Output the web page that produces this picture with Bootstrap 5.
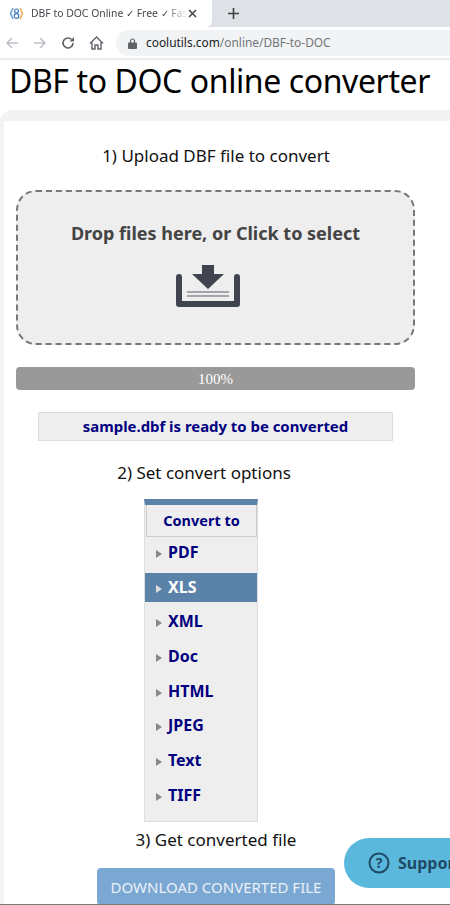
<!DOCTYPE html>
<html lang="en">
<head>
    <meta charset="UTF-8">
    <meta name="viewport" content="width=device-width, initial-scale=1.0">
    <title>DBF to DOC online converter</title>
    <link href="https://cdn.jsdelivr.net/npm/bootstrap@5.3.5/dist/css/bootstrap.min.css" rel="stylesheet">
    <style>
        html, body { height: 905px; overflow: hidden; }
        body { position: relative; font-family: "Noto Sans", "Liberation Sans", sans-serif; color: #111; background: #fff; }
        .tab-strip { height: 27px; background: #dee1e6; }
        .browser-tab { width: 212px; background: #fff; border-radius: 0 0 6px 0; padding: 0 0 0 9px; font-size: 10.4px; color: #45484d; white-space: nowrap; }
        .tab-title { width: 157px; overflow: hidden; margin-left: 7px; -webkit-mask-image: linear-gradient(to right, #000 85%, transparent); mask-image: linear-gradient(to right, #000 85%, transparent); }
        .tool-bar { height: 33px; padding: 1px 0 0 5px; border-bottom: 2px solid #eceded; }
        .tool-bar svg.gap-icon { margin-left: 14px; }
        .omni { flex: 1; height: 26px; margin-left: 12px; background: #f1f3f4; border-radius: 13px 0 0 13px; padding-left: 12px; font-size: 11.9px; color: #70757a; }
        .omni svg { margin-right: 9px; }
        .omni b { font-weight: 400; color: #202124; }
        .page-title { font-family: "Noto Sans", sans-serif; font-size: 32px; letter-spacing: -.4px; font-weight: 400; line-height: 41px; margin: 0; padding-left: 9px; color: #000; white-space: nowrap; }
        .panel-wrap { margin-top: 9px; height: 795px; background: #f3f3f3; border-radius: 12px 0 0 0; padding: 11px 0 0 4px; }
        .panel-inner { height: 100%; background: #fff; padding-left: 12px; width: 100%; }
        .step-label { font-size: 17px; line-height: 22px; text-align: center; width: 400px; }
        .step-one { padding-top: 24px; }
        .step-two { width: 376px; margin-top: 21px; }
        .step-three { margin-top: 7px; }
        .drop-area { width: 399px; height: 155px; margin-top: 23px; background: #eee; border: 2px dashed #777; border-radius: 20px; padding-top: 29px; text-align: center; color: #444; font-weight: 700; font-size: 18px; line-height: 24px; }
        .drop-area svg { display: block; margin: 20px 0 0 158px; }
        .bar-done { width: 399px; height: 23px; margin-top: 22px; background: #999; border-radius: 4px; color: #fff; font-family: "Liberation Serif", serif; font-size: 15px; line-height: 24px; text-align: center; }
        .ready-note { width: 355px; height: 29px; margin: 22px 0 0 22px; background: #eee; border: 1px solid #ddd; color: #000080; font-weight: 700; font-size: 14.9px; line-height: 27px; text-align: center; }
        .format-menu { width: 114px; margin: 15px 0 0 128px; background: #eee; border: 1px solid #ddd; border-top: 6px solid #5b82a8; height: 323px; }
        .menu-head { margin: 0 0 0 1px; height: 32px; background: #eee; border: 1px solid #ccc; border-top: 0; color: #000080; font-weight: 700; font-size: 14.5px; line-height: 31px; text-align: center; }
        .menu-item { height: 29px; margin-top: 5.7px; padding-left: 11px; color: #000080; font-weight: 700; font-size: 16px; line-height: 29px; }
        .menu-head + .menu-item { margin-top: 1px; }
        .menu-item.active-item { background: #5b82a8; color: #fff; }
        .menu-item i { display: inline-block; border-left: 6px solid #888; border-top: 4.5px solid transparent; border-bottom: 4.5px solid transparent; margin-right: 6px; }
        .active-item i { border-left-color: #ddd; }
        .download-btn { width: 238px; height: 37px; margin: 17px 0 0 81px; padding: 0; background: #7ba8d2; border: 0; border-radius: 4px; color: #e9f0f7; font-size: 15px; line-height: 36px; display: block; }
        .support-btn { position: absolute; left: 344px; top: 838px; width: 130px; height: 50px; background: #5bb8dd; border-radius: 25px; color: #1f4a66; font-weight: 700; font-size: 16px; padding-left: 24px; white-space: nowrap; }
        .bottom-line { position: absolute; left: 0; right: 0; top: 904px; height: 1px; background: #777; }
    </style>
</head>
<body>
    <div class="tab-strip d-flex">
        <div class="browser-tab d-flex align-items-center">
            <svg width="15" height="15" viewBox="0 0 15 15"><path d="M4 2 1.500 7.500 4 13" fill="none" stroke="#6aa5d8" stroke-width="1.600"/><path d="M11 2l2.500 5.500L11 13" fill="none" stroke="#e8b35a" stroke-width="1.600"/><circle cx="7.500" cy="5" r="2" fill="none" stroke="#3a78b8" stroke-width="1.200"/><circle cx="7.500" cy="10" r="2.300" fill="none" stroke="#3a78b8" stroke-width="1.200"/></svg>
            <div class="tab-title">DBF to DOC Online ✓ Free ✓ Fast</div>
            <svg width="9" height="9" viewBox="0 0 9 9"><path d="M1 1l7 7M8 1 1 8" stroke="#45484d" stroke-width="1.600"/></svg>
        </div>
        <svg class="ms-3 mt-2" width="11" height="11" viewBox="0 0 11 11"><path d="M5.500 0v11M0 5.500h11" stroke="#3c4043" stroke-width="1.600"/></svg>
    </div>
    <div class="tool-bar d-flex align-items-center">
        <svg width="14" height="14" viewBox="0 0 14 14"><path d="M13 7H2M7 2 2 7l5 5" fill="none" stroke="#bdc1c6" stroke-width="1.500"/></svg>
        <svg class="gap-icon" width="14" height="14" viewBox="0 0 14 14"><path d="M1 7h11M7 2l5 5-5 5" fill="none" stroke="#bdc1c6" stroke-width="1.500"/></svg>
        <svg class="gap-icon" width="14" height="14" viewBox="0 0 14 14"><path d="M12 7a5 5 0 1 1-1.500-3.600" fill="none" stroke="#5f6368" stroke-width="1.600"/><path d="M13 1v4.500H8.500z" fill="#5f6368"/></svg>
        <svg class="gap-icon" width="15" height="14" viewBox="0 0 15 14"><path d="M1 7.500 7.500 1 14 7.500M3 6.500V13h3V9h3v4h3V6.500" fill="none" stroke="#5f6368" stroke-width="1.400"/></svg>
        <div class="omni d-flex align-items-center">
            <svg width="9" height="11" viewBox="0 0 9 11"><path d="M2.500 5V3a2 2 0 0 1 4 0v2" fill="none" stroke="#5f6368" stroke-width="1.200"/><rect y="4.500" width="9" height="6.500" rx="1" fill="#5f6368"/></svg>
            <span><b>coolutils.com</b>/online/DBF-to-DOC</span>
        </div>
    </div>
    <h1 class="page-title">DBF to DOC online converter</h1>
    <div class="panel-wrap">
        <div class="panel-inner">
            <div class="step-label step-one">1) Upload DBF file to convert</div>
            <div class="drop-area">
                Drop files here, or Click to select
                <svg width="64" height="42" viewBox="0 0 64 42">
                    <path d="M26 0h12v9h10L32 24 16 9h10z" fill="#40444f"/>
                    <path d="M3 12v27h58V12" fill="none" stroke="#40444f" stroke-width="6" stroke-linecap="round" stroke-linejoin="round"/>
                    <path d="M11 27h42M11 31h42" stroke="#8a8d94" stroke-width="1.500"/>
                </svg>
            </div>
            <div class="bar-done">100%</div>
            <div class="ready-note">sample.dbf is ready to be converted</div>
            <div class="step-label step-two">2) Set convert options</div>
            <div class="format-menu">
                <div class="menu-head">Convert to</div>
                <div class="menu-item"><i></i>PDF</div>
                <div class="menu-item active-item"><i></i>XLS</div>
                <div class="menu-item"><i></i>XML</div>
                <div class="menu-item"><i></i>Doc</div>
                <div class="menu-item"><i></i>HTML</div>
                <div class="menu-item"><i></i>JPEG</div>
                <div class="menu-item"><i></i>Text</div>
                <div class="menu-item"><i></i>TIFF</div>
            </div>
            <div class="step-label step-three">3) Get converted file</div>
            <button class="download-btn" type="button">DOWNLOAD CONVERTED FILE</button>
        </div>
    </div>
    <div class="support-btn d-flex align-items-center">
        <svg class="me-2" width="22" height="22" viewBox="0 0 22 22"><circle cx="11" cy="11" r="9.500" fill="none" stroke="#1f4a66" stroke-width="2"/><text x="11" y="16" text-anchor="middle" font-size="14" font-weight="700" fill="#1f4a66" font-family="Noto Sans, sans-serif">?</text></svg>
        Support
    </div>
    <div class="bottom-line"></div>
    <script src="https://cdn.jsdelivr.net/npm/bootstrap@5.3.5/dist/js/bootstrap.bundle.min.js"></script>
</body>
</html>
